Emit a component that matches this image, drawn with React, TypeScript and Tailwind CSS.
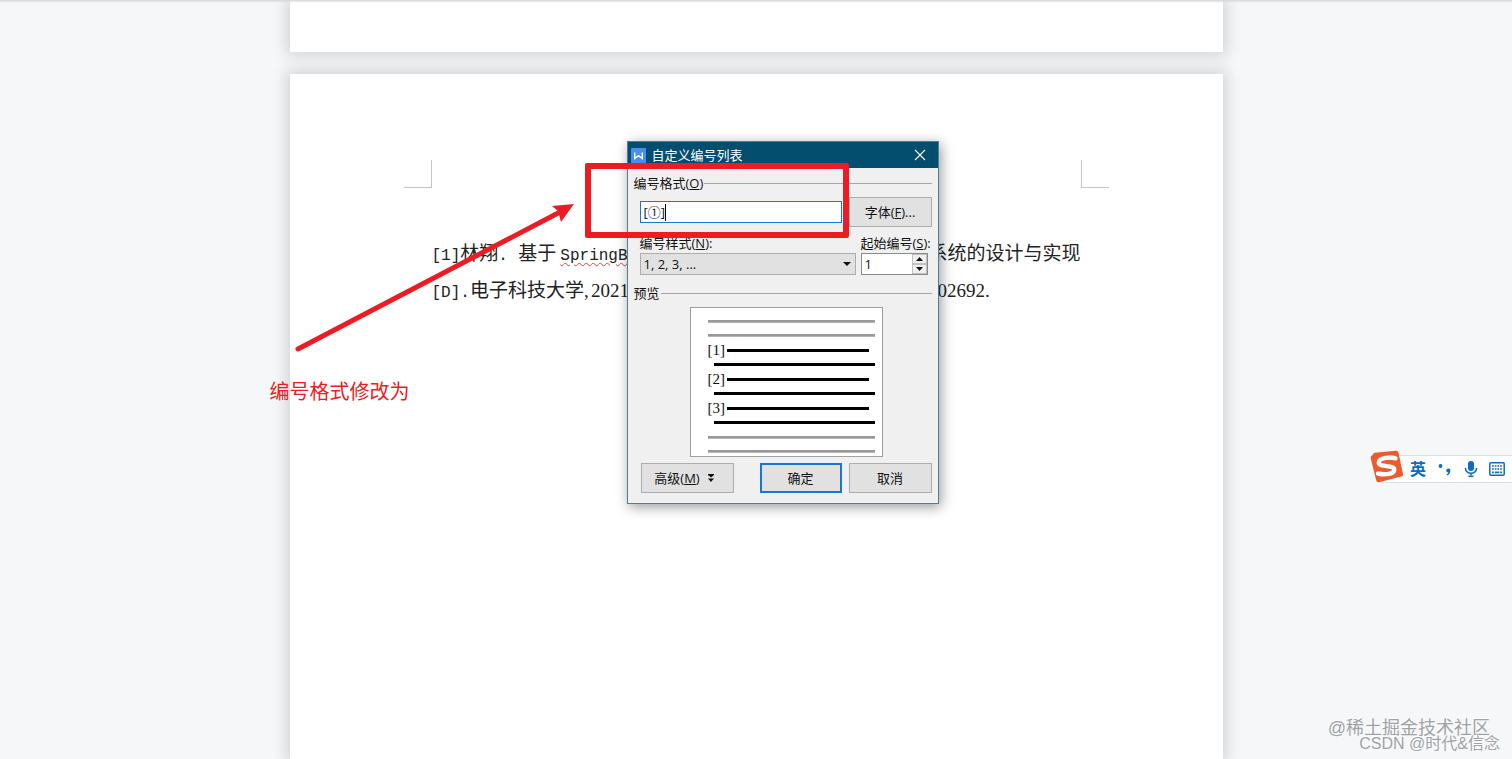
import React from "react";

const ui = "font-['Open_Sans','Noto_Sans_CJK_SC',sans-serif]";
const serif = "font-['Liberation_Serif','Noto_Sans_CJK_SC',serif] text-[19px]";
const mono = "font-['Liberation_Mono','Noto_Sans_CJK_SC',monospace] text-[16px]";
const button =
  "flex h-[30px] items-center justify-center border border-[#adadad] bg-[#e1e1e1] text-[13px] text-[#111]";

function Legend({ children }: { children: React.ReactNode }) {
  return (
    <div className="flex h-5 items-center">
      <span className="whitespace-nowrap">{children}</span>
      <span className="ml-px mr-1.5 h-px flex-1 bg-[#a6a6a6]" />
    </div>
  );
}

function NumberedRow({ label }: { label: string }) {
  return (
    <>
      <div className="flex h-[3px] items-center pr-1.5">
        <span className="w-[19px] font-['Liberation_Serif',serif] text-[15px] leading-[1px]">{label}</span>
        <span className="h-[3px] flex-1 bg-black" />
      </div>
      <div className="ml-1.5 h-[3px] bg-black" />
    </>
  );
}

function GreyLine() {
  return <div className="h-[3px] border-b border-[#b4b4b4] bg-[#999]" />;
}

function NumberingDialog() {
  return (
    <section
      role="dialog"
      aria-labelledby="dialog-title"
      className={`${ui} absolute left-[337px] top-[67px] w-[312px] border border-[#4d7f96] bg-[#f0f0f0] text-[13px] leading-5 text-[#111] shadow-[2px_3px_12px_rgba(0,0,0,0.4)]`}
    >
      <header className="flex h-[26px] items-center bg-[#034d6e] pl-[3px] pr-3 text-white">
        <svg viewBox="0 0 15 15" className="mr-1.5 size-[15px]" aria-hidden="true">
          <rect width="15" height="15" rx="1" fill="#4a8cf0" />
          <path d="M3.7 4.500v6L7.500 7.600l3.800 2.900v-6" fill="none" stroke="#fff" strokeWidth="1.400" />
        </svg>
        <h1 id="dialog-title" className="flex-1 text-[13px] font-normal">自定义编号列表</h1>
        <button aria-label="关闭">
          <svg viewBox="0 0 12 12" className="size-3" aria-hidden="true">
            <path d="M1 1l10 10M11 1L1 11" stroke="#fff" strokeWidth="1.1" />
          </svg>
        </button>
      </header>

      <div className="pb-2.5 pl-1.5 pt-[5px]">
        <Legend>
          <label htmlFor="format">编号格式(<u>O</u>)</label>
        </Legend>
        <div className="mr-1.5 mt-1 flex items-center justify-between pl-1.5">
          <div className="flex h-[22px] w-[202px] items-center border border-[#1879c9] bg-white pl-[3px]">
            <input id="format" defaultValue="[①]" className="w-[21px] bg-transparent p-0 text-[13px] outline-none" />
            <span className="h-[17px] w-px bg-black" />
          </div>
          <button className={`${button} w-[83px]`}>字体(<u>F</u>)...</button>
        </div>

        <div className="mt-1.5 flex pl-1.5">
          <div className="w-[216px]">
            <label htmlFor="style" className="block">编号样式(<u>N</u>):</label>
            <div className="relative">
              <select
                id="style"
                className="block h-[22px] w-full appearance-none border border-[#adadad] bg-[#e1e1e1] pl-[3px] text-[13px] leading-5 outline-none"
              >
                <option>1, 2, 3, ...</option>
              </select>
              <svg viewBox="0 0 8 4" className="pointer-events-none absolute right-[5px] top-[9px] h-1 w-2" aria-hidden="true">
                <path d="M0 0h8L4 4z" fill="#111" />
              </svg>
            </div>
          </div>
          <div className="ml-[5px]">
            <label htmlFor="start" className="block whitespace-nowrap">起始编号(<u>S</u>):</label>
            <div className="flex h-[22px] w-[67px] border border-[#8a8a8a] bg-white pl-[3px]">
              <input id="start" defaultValue="1" className="min-w-0 flex-1 p-0 text-[13px] outline-none" />
              <div className="flex w-[15px] flex-col">
                <button aria-label="增加" className="flex flex-1 items-center justify-center border border-[#c0c0c0] bg-[#f0f0f0]">
                  <svg viewBox="0 0 7 4" className="h-1 w-[7px]"><path d="M0 4h7L3.500 0z" fill="#111" /></svg>
                </button>
                <button aria-label="减少" className="flex flex-1 items-center justify-center border border-[#c0c0c0] bg-[#f0f0f0]">
                  <svg viewBox="0 0 7 4" className="h-1 w-[7px]"><path d="M0 0h7L3.500 4z" fill="#111" /></svg>
                </button>
              </div>
            </div>
          </div>
        </div>

        <div className="mt-2">
          <Legend>预览</Legend>
        </div>
        <div className="ml-14 mt-1 flex h-[150px] w-[193px] flex-col justify-between border border-[#a0a0a0] bg-white pb-[3px] pl-[17px] pr-[7px] pt-3">
          <GreyLine />
          <GreyLine />
          <NumberedRow label="[1]" />
          <NumberedRow label="[2]" />
          <NumberedRow label="[3]" />
          <GreyLine />
          <GreyLine />
        </div>

        <div className="mr-1.5 mt-1.5 flex pl-[7px]">
          <button className={`${button} w-[93px] gap-2 pr-1.5`}>
            <span>高级(<u>M</u>)</span>
            <svg viewBox="0 0 6 8" className="h-2 w-1.5" aria-hidden="true">
              <path d="M0 0h6v1L3 3.500 0 1zM0 4.500h6L3 8z" fill="#111" />
            </svg>
          </button>
          <button className="ml-auto flex h-[30px] w-[82px] items-center justify-center border-2 border-[#1579cf] bg-[#e1e1e1] text-[13px]">确定</button>
          <button className={`${button} ml-[7px] w-[83px]`}>取消</button>
        </div>
      </div>
    </section>
  );
}

function Annotation() {
  return (
    <>
      <svg viewBox="0 0 300 160" className="absolute left-0 top-[121px] h-[160px] w-[300px]" aria-hidden="true">
        <path d="M8 154L272 16" stroke="#ec1c24" strokeWidth="5" strokeLinecap="round" />
        <path d="M284 9l-22 2 6 5 3 11z" fill="#ec1c24" />
      </svg>
      <div className="absolute left-[295px] top-[89px] h-[75px] w-[264px] rounded-[2px] border-[6px] border-[#ec1c24]" />
      <p className={`${ui} absolute left-[-20px] top-[303px] whitespace-nowrap text-[20px] leading-[30px] text-[#ec1c24]`}>
        编号格式修改为
      </p>
    </>
  );
}

function InputMethodBar() {
  return (
    <aside className="absolute right-0 top-[451px] flex h-9 items-center">
      <svg viewBox="0 0 34 34" className="relative z-10 -mr-[19px] mb-1 size-[34px]" aria-hidden="true">
        <path d="M3 4.500Q3.200 3 5 2.700L26 .8q2-.2 2.400 1.700L33 24q.4 2-1.500 2.600L9 32.300q-2 .4-2.700-1.600L.8 8.500Q.3 6.400 2 5.500z" fill="#f0592b" />
        <path d="M25.500 8.300C19 6.500 8.500 8 8.800 12.800c.3 4.400 15.200 2.200 15.500 6.700.2 4.600-9.500 5.700-16.300 4" fill="none" stroke="#fff" strokeWidth="4.400" strokeLinecap="round" />
      </svg>
      <div className="flex h-7 items-center border-y border-[#d9e2ea] bg-white pl-[25px] pr-[7px] text-[#0b6cc4]">
        <span className={`${ui} text-[16px] font-bold leading-6`}>英</span>
        <svg viewBox="0 0 14 14" className="ml-3 size-3.5" fill="currentColor" aria-hidden="true">
          <circle cx="2.500" cy="4" r="1.900" />
          <path d="M10.300 6.500a2.100 2.100 0 0 1 2.100 2.300c0 2.300-1.400 3.900-3.300 4.600l-.5-.9c1-.5 1.600-1.200 1.700-1.900a2.050 2.050 0 0 1 0-4.100z" />
        </svg>
        <svg viewBox="0 0 14 18" className="ml-3 h-[18px] w-3.5" aria-hidden="true">
          <rect x="4" y="1" width="6" height="10" rx="3" fill="currentColor" />
          <path d="M1.500 8v.5a5.500 4.700 0 0 0 11 0V8M7 13.500v2" fill="none" stroke="currentColor" strokeWidth="1.500" />
          <path d="M4.500 16.300h5" stroke="currentColor" strokeWidth="1.600" />
        </svg>
        <svg viewBox="0 0 16 14" className="ml-[11px] h-3.5 w-4" fill="none" stroke="currentColor" aria-hidden="true">
          <rect x=".8" y=".8" width="14.400" height="12.400" rx="1" strokeWidth="1.500" />
          <path d="M3 4h10M3 7h10" strokeWidth="1.700" strokeDasharray="1.800 .9" />
          <path d="M3 10.300h1.800M5.800 10.300h4.500M11.200 10.300H13" strokeWidth="1.700" />
        </svg>
      </div>
    </aside>
  );
}

export default function App() {
  return (
    <div className="relative flex min-h-screen justify-center overflow-hidden bg-[#f5f7f9]">
      <main className="flex w-[933px] flex-col gap-[22px]">
        <div className="h-[52px] bg-white shadow-[0_0_14px_4px_rgba(0,0,0,0.14)]" />
        <article className="relative flex-1 bg-white px-[142px] pt-[162px] text-[#222] shadow-[0_0_14px_4px_rgba(0,0,0,0.14)]">
          <span className="absolute left-[114px] top-[86px] h-7 w-7 border-b border-r border-[#c4c4c4]" />
          <span className="absolute right-[114px] top-[86px] h-7 w-7 border-b border-l border-[#c4c4c4]" />
          <p className={`${serif} flex h-[37px] items-center justify-between whitespace-nowrap`}>
            <span className="flex items-baseline">
              <span className={mono}>[1]</span>
              <span>林翔</span>
              <span className={`${mono} w-5`}>.</span>
              <span>基于</span>
              <span className="ml-1 font-['Liberation_Mono',monospace] text-[16px] underline decoration-[#e04040] decoration-wavy decoration-1 underline-offset-2">SpringBoot</span>
            </span>
            <span>系统的设计与实现</span>
          </p>
          <p className={`${serif} flex h-[37px] items-center whitespace-nowrap`}>
            <span className="flex w-[506px] items-baseline">
              <span className={mono}>[D].</span>
              <span>电子科技大学</span>
              <span className="w-[7px]">,</span>
              <span>2021</span>
            </span>
            <span>02692.</span>
          </p>
          <NumberingDialog />
          <Annotation />
        </article>
      </main>
      <div className="absolute inset-x-0 top-0 h-[3px] bg-linear-to-b from-[#d5d6d8] to-transparent" />
      <InputMethodBar />
      <footer className="absolute bottom-[7px] right-3 flex flex-col items-end font-['Liberation_Sans','Noto_Sans_CJK_SC',sans-serif] text-[#a0a2a5]">
        <span className="mr-2.5 text-[18px] leading-4 [text-shadow:-1px_-1px_0_#fff]">@稀土掘金技术社区</span>
        <span className="text-[16px] leading-4 [text-shadow:-1px_-1px_0_#fff]">CSDN @时代&amp;信念</span>
      </footer>
    </div>
  );
}
